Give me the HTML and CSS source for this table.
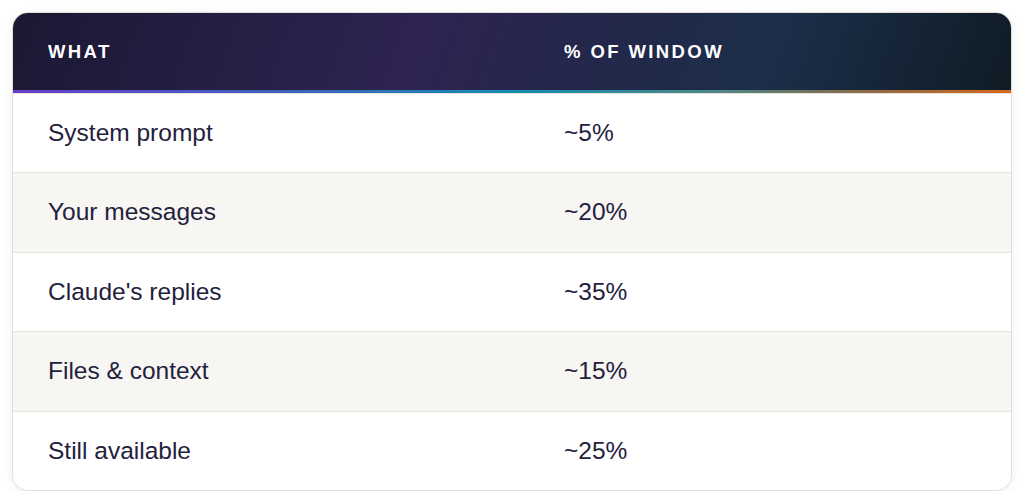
FILE: index.html
```html
<!DOCTYPE html>
<html lang="en">
<head>
<meta charset="utf-8">
<title>Context window</title>
<link rel="stylesheet" href="styles.css">
</head>
<body>
<div class="card" role="table">
  <div class="head" role="row">
    <div class="hcell" role="columnheader">What</div>
    <div class="hcell" role="columnheader">% of window</div>
  </div>
  <div class="accent"></div>
  <div class="rows">
    <div class="row" role="row"><div class="cell">System prompt</div><div class="cell">~5%</div></div>
    <div class="row alt" role="row"><div class="cell">Your messages</div><div class="cell">~20%</div></div>
    <div class="row" role="row"><div class="cell">Claude's replies</div><div class="cell">~35%</div></div>
    <div class="row alt" role="row"><div class="cell">Files &amp; context</div><div class="cell">~15%</div></div>
    <div class="row" role="row"><div class="cell">Still available</div><div class="cell">~25%</div></div>
  </div>
</div>
</body>
</html>
```

FILE: styles.css
```css
html, body {
  margin: 0;
  padding: 0;
  background: #ffffff;
}

body {
  padding: 12px 12px 0 12px;
  font-family: "Liberation Sans", Arial, sans-serif;
}

.card {
  border: 1px solid #e4dfd5;
  border-radius: 16px;
  overflow: hidden;
  background: #ffffff;
  box-shadow: 0 2px 10px rgba(0, 0, 0, 0.07);
}

.head {
  display: grid;
  grid-template-columns: 516px 1fr;
  height: 77px;
  align-items: center;
  background: linear-gradient(110deg, #1b1833 0%, #241f44 22%, #2e2351 40%, #22284a 60%, #1c2e4a 75%, #0f1c25 100%);
}

.hcell {
  padding-left: 35px;
  color: #ffffff;
  font-weight: 700;
  font-size: 18.5px;
  letter-spacing: 2.4px;
  text-transform: uppercase;
}

.accent {
  height: 3px;
  background: linear-gradient(90deg, #6a3fcc 0%, #3c63bd 28%, #168db0 50%, #4b8788 70%, #8a6a48 85%, #d8681c 100%);
}

.row {
  display: grid;
  grid-template-columns: 516px 1fr;
  align-items: center;
  border-top: 1px solid #e9e4db;
  padding: 24px 0;
  background: #ffffff;
}

.row.alt {
  background: #f7f6f3;
}

.cell {
  padding-left: 35px;
  font-size: 24.5px;
  line-height: 30.4px;
  color: #24213d;
}
```
